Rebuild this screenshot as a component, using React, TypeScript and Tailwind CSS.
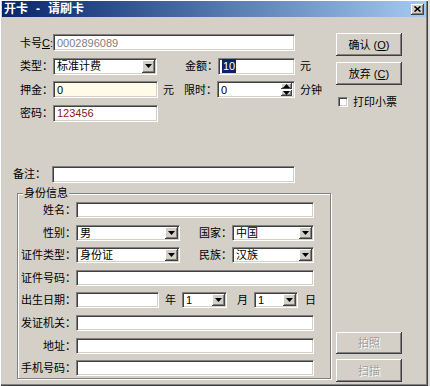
import React from 'react';

const sunken =
  'border border-t-[#808080] border-l-[#808080] border-b-white border-r-white shadow-[inset_1px_1px_0_#404040,inset_-1px_-1px_0_#d4d0c8]';
const raised =
  'bg-[#d4d0c8] shadow-[inset_-1px_-1px_0_#404040,inset_1px_1px_0_#ffffff,inset_-2px_-2px_0_#808080]';

const Field: React.FC<{ className?: string; children?: React.ReactNode }> = ({ className = '', children }) => (
  <div className={`${sunken} flex items-center pl-[3px] pr-[1px] py-[1px] ${className}`}>{children}</div>
);

const Arrow: React.FC<{ up?: boolean }> = ({ up }) => (
  <svg width="7" height="4" viewBox="0 0 7 4">
    <path d={up ? 'M0 4 L3.5 0 L7 4 Z' : 'M0 0 L7 0 L3.5 4 Z'} fill="#000" />
  </svg>
);

const Select: React.FC<{ className?: string; value?: string }> = ({ className = '', value }) => (
  <Field className={`bg-white ${className}`}>
    <span className="flex-1">{value}</span>
    <div className={`${raised} self-stretch w-[13px] flex items-center justify-center`}>
      <Arrow />
    </div>
  </Field>
);

const Button: React.FC<{ children: React.ReactNode; disabled?: boolean; className?: string }> = ({
  children,
  disabled,
  className = '',
}) => (
  <div
    className={`${raised} w-[66px] flex items-center justify-center ${
      disabled ? 'text-[#a0a0a0] [text-shadow:1px_1px_0_#fff]' : 'text-black'
    } ${className}`}
  >
    {children}
  </div>
);

const App: React.FC = () => {
  return (
    <div className="w-[430px] h-[386px] bg-[#dddcd8] font-['Liberation_Sans','Noto_Sans_CJK_SC',sans-serif] text-[11px] leading-[14px] text-black">
      <div className="w-[428px] h-[386px] bg-[#d4d0c8] pt-[1px] px-[2px] shadow-[inset_1px_1px_0_#ffffff,inset_-1px_-1px_0_#404040,inset_-2px_-2px_0_#808080]">
        {/* title bar */}
        <div className="h-[16px] bg-linear-to-r from-[#0a246a] to-[#a6caf0] flex items-center justify-between pl-[2px] pr-[2px]">
          <div className="flex items-center text-white font-bold text-[12px]">
            <span>开卡</span>
            <span className="ml-[8px]">-</span>
            <span className="ml-[8px]">请刷卡</span>
          </div>
          <div className={`${raised} w-[13px] h-[11px] flex items-center justify-center`}>
            <svg width="7" height="6" viewBox="0 0 7 6">
              <path d="M0.5 0.5 L6.5 5.5 M6.5 0.5 L0.5 5.5" stroke="#000" strokeWidth="1.6" />
            </svg>
          </div>
        </div>

        {/* body */}
        <div className="flex h-[367px] pl-[11px]">
          <div className="w-[317px] flex flex-col pt-[17px]">
            <div className="flex flex-col gap-[6.67px]">
              <div className="flex items-center h-[17px]">
                <span className="w-[40px] text-right">
                  卡号<span className="underline">C</span>:
                </span>
                <Field className="bg-white w-[242px] h-full text-[#808080]">0002896089</Field>
              </div>
              <div className="flex items-center h-[17px]">
                <span className="w-[40px] text-right">类型：</span>
                <Select className="w-[104px] h-full" value="标准计费" />
                <span className="w-[61px] text-right">金额：</span>
                <Field className="bg-white w-[77px] h-full">
                  <span className="bg-[#0a246a] text-white px-[1px]">10</span>
                </Field>
                <span className="ml-[5px]">元</span>
              </div>
              <div className="flex items-center h-[17px]">
                <span className="w-[40px] text-right">押金：</span>
                <Field className="bg-[#fffbe8] w-[105px] h-full">0</Field>
                <span className="ml-[5px] w-[11px]">元</span>
                <span className="w-[43px] text-right">限时：</span>
                <Field className="bg-white w-[78px] h-full">
                  <span className="flex-1">0</span>
                  <div className="self-stretch w-[11px] flex flex-col gap-[1px] mr-[1px]">
                    <div className={`${raised} flex-1 flex items-center justify-center`}>
                      <Arrow up />
                    </div>
                    <div className={`${raised} flex-1 flex items-center justify-center`}>
                      <Arrow />
                    </div>
                  </div>
                </Field>
                <span className="ml-[5px]">分钟</span>
              </div>
              <div className="flex items-center h-[17px]">
                <span className="w-[40px] text-right">密码：</span>
                <Field className="bg-white w-[105px] h-full text-[#8b1a1a]">123456</Field>
              </div>
            </div>

            <div className="flex items-center h-[17px] mt-[44px]">
              <span className="w-[39px]">备注：</span>
              <Field className="bg-white w-[243px] h-full" />
            </div>

            {/* group box */}
            <div className="relative mt-[10px] ml-[4px] w-[314px] h-[186px] border border-[#808080] shadow-[inset_1px_1px_0_#ffffff,1px_1px_0_#ffffff]">
              <span className="absolute -top-[8px] left-[5px] bg-[#d4d0c8] px-[1px]">身份信息</span>
              <div className="flex flex-col gap-[6.6px] pt-[8px]">
                <div className="flex items-center h-[16px]">
                  <span className="w-[58px] text-right">姓名：</span>
                  <Field className="bg-white w-[238px] h-full" />
                </div>
                <div className="flex items-center h-[16px]">
                  <span className="w-[58px] text-right">性别：</span>
                  <Select className="w-[104px] h-full" value="男" />
                  <span className="w-[52px] text-right">国家：</span>
                  <Select className="w-[82px] h-full" value="中国" />
                </div>
                <div className="flex items-center h-[16px]">
                  <span className="w-[58px] text-right">证件类型：</span>
                  <Select className="w-[104px] h-full" value="身份证" />
                  <span className="w-[52px] text-right">民族：</span>
                  <Select className="w-[82px] h-full" value="汉族" />
                </div>
                <div className="flex items-center h-[16px]">
                  <span className="w-[58px] text-right">证件号码：</span>
                  <Field className="bg-white w-[238px] h-full" />
                </div>
                <div className="flex items-center h-[16px]">
                  <span className="w-[58px] text-right">出生日期：</span>
                  <Field className="bg-white w-[83px] h-full" />
                  <span className="ml-[6px]">年</span>
                  <Select className="ml-[6px] w-[45px] h-full" value="1" />
                  <span className="ml-[10px]">月</span>
                  <Select className="ml-[6px] w-[44px] h-full" value="1" />
                  <span className="ml-[7px]">日</span>
                </div>
                <div className="flex items-center h-[16px]">
                  <span className="w-[58px] text-right">发证机关：</span>
                  <Field className="bg-white w-[238px] h-full" />
                </div>
                <div className="flex items-center h-[16px]">
                  <span className="w-[58px] text-right">地址：</span>
                  <Field className="bg-white w-[238px] h-full" />
                </div>
                <div className="flex items-center h-[16px]">
                  <span className="w-[58px] text-right">手机号码：</span>
                  <Field className="bg-white w-[238px] h-full" />
                </div>
              </div>
            </div>
          </div>

          {/* right column */}
          <div className="ml-[6px] w-[66px] flex flex-col pt-[16px] pb-[2px]">
            <Button className="h-[23px]">
              确认 (<span className="underline">O</span>)
            </Button>
            <Button className="h-[23px] mt-[6px]">
              放弃 (<span className="underline">C</span>)
            </Button>
            <div className="flex items-center mt-[12px] h-[10px]">
              <div className={`${sunken} bg-white w-[10px] h-[10px] ml-[2px]`} />
              <span className="ml-[5px] whitespace-nowrap">打印小票</span>
            </div>
            <Button disabled className="h-[22px] mt-auto">
              拍照
            </Button>
            <Button disabled className="h-[23px] mt-[5px]">
              扫描
            </Button>
          </div>
        </div>
      </div>
    </div>
  );
};

export default App;
